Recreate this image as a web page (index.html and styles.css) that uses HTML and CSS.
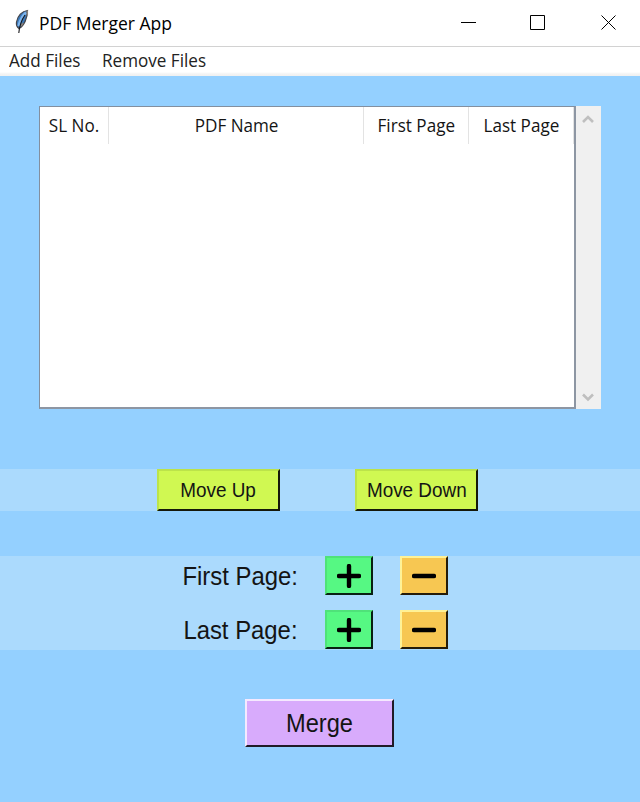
FILE: index.html
```html
<!DOCTYPE html>
<html lang="en">
<head>
<meta charset="utf-8">
<title>PDF Merger App</title>
<link rel="stylesheet" href="styles.css">
</head>
<body>
<header class="titlebar">
  <svg class="feather" width="16" height="26" viewBox="0 0 16 26">
    <path d="M13.500 1.500C8 2 3.500 7 2.500 13c-.5 3 .3 5 2.500 6.500C10 17 13.500 9 13.500 1.500z" fill="#3b78b8" stroke="#45454b" stroke-width="1.200"/>
    <path d="M12 3.500C8 7 6 11 4.500 17" fill="none" stroke="#7fb6ee" stroke-width="2.400"/>
    <path d="M13.300 1.500v5M9 14l-2 3" fill="none" stroke="#8a8178" stroke-width="1.500"/>
    <path d="M11 6C7.500 11 5.500 16 4.800 24" fill="none" stroke="#16161a" stroke-width="1.100"/>
  </svg>
  <h1 class="title">PDF Merger App</h1>
  <svg class="controls" width="160" height="20" viewBox="0 0 160 20" fill="none" stroke="#000">
    <path d="M1 10.500h15M70.500 3.500h14v14h-14zM141.500 3.500l14 14M155.500 3.500l-14 14"/>
  </svg>
</header>
<nav class="menu"><span class="add">Add Files</span><span class="remove">Remove Files</span></nav>
<main class="app">
  <section class="list">
    <div class="table">
      <div class="head">
        <div class="cell"><span>SL No.</span></div>
        <div class="cell"><span>PDF Name</span></div>
        <div class="cell"><span>First Page</span></div>
        <div class="cell"><span>Last Page</span></div>
      </div>
    </div>
    <div class="scroll">
      <svg width="12" height="10" viewBox="0 0 12 10"><path d="M1 8L6 3l5 5" fill="none" stroke="#bfbfbf" stroke-width="2.600"/></svg>
      <svg width="12" height="10" viewBox="0 0 12 10"><path d="M1 2.500l5 5 5-5" fill="none" stroke="#bfbfbf" stroke-width="2.600"/></svg>
    </div>
  </section>
  <section class="band moves">
    <button class="btn lime"><span>Move Up</span></button>
    <button class="btn lime"><span>Move Down</span></button>
  </section>
  <section class="band pages">
    <span class="label">First Page:</span>
    <button class="btn green"><svg width="24" height="24" viewBox="0 0 24 24"><path d="M2 12h20M12 2v20"/></svg></button>
    <button class="btn orange"><svg width="24" height="24" viewBox="0 0 24 24"><path d="M2 12h20"/></svg></button>
    <span class="label">Last Page:</span>
    <button class="btn green"><svg width="24" height="24" viewBox="0 0 24 24"><path d="M2 12h20M12 2v20"/></svg></button>
    <button class="btn orange"><svg width="24" height="24" viewBox="0 0 24 24"><path d="M2 12h20"/></svg></button>
  </section>
  <button class="btn merge"><span>Merge</span></button>
</main>
</body>
</html>
```
FILE: styles.css
```css
* { box-sizing: border-box; }
body { margin: 0; width: 640px; height: 802px; overflow: hidden; background: #94d0ff; color: #141414; font-family: "Open Sans", sans-serif; }
span { display: inline-block; white-space: nowrap; }
.titlebar { height: 47px; display: flex; align-items: flex-start; background: #fff; border-bottom: 1px solid #d2d2d2; padding: 8px 20px 0 14px; }
.feather { flex: none; margin-top: 1px; }
.title { margin: 3px 0 0 9px; font-size: 18px; line-height: 25px; font-weight: 400; color: #000; white-space: nowrap; transform: scaleX(.972); transform-origin: left; }
.controls { flex: none; margin: 4px 0 0 auto; }
.menu { height: 29px; display: flex; background: linear-gradient(#fff 25px, #f3f3f3 27px, #f0f0f0); padding-left: 9px; font-size: 18px; line-height: 27px; color: #222; }
.menu span { transform: scaleX(.95); transform-origin: left; }
.add { width: 93px; }
.app { display: flex; flex-direction: column; }
.list { display: flex; margin: 30px 39px 0; height: 303px; }
.table { width: 537px; background: #fff; border: 2px solid #838b9a; border-width: 1px 2px 2px 1px; border-color: #838f9f #8d96a3 #8d96a3 #838f9f; }
.head { display: grid; grid-template-columns: 69px 255px 105px 105px; height: 37px; }
.cell { border-right: 1px solid #e3e3e3; font-size: 18px; line-height: 36px; display: flex; justify-content: center; }
.cell span { transform: translateX(.5px) scaleX(.95); }
.scroll { width: 25px; flex: none; background: #f0f0f0; display: flex; flex-direction: column; justify-content: space-between; align-items: center; padding: 8px 1px 7px 0; }
.band { background: #abdafd; }
.moves { margin-top: 60px; height: 42px; display: flex; gap: 75px; padding-left: 157px; }
.moves .btn { width: 123px; height: 42px; }
.btn { border: 2px solid; padding: 0; border-radius: 0; display: flex; align-items: center; justify-content: center; font-family: "Liberation Sans", sans-serif; color: #141414; }
.btn span { transform: scaleX(.945); }
.moves span { padding-top: 1px; }
.btn svg { fill: none; stroke: #000; stroke-width: 4.4; stroke-linecap: round; }
.lime { background: #d0f852; border-color: #bce34a #15180a #15180a #bce34a; font-size: 20px; }
.green { background: #56f883; border-color: #4fe279 #092012 #092012 #4fe279; }
.orange { background: #f7c752; border-color: #fff296 #241b09 #241b09 #fff296; }
.pages { margin-top: 45px; height: 94px; display: grid; grid-template-columns: 298px 48px 48px; column-gap: 27px; grid-template-rows: 39px 39px; row-gap: 15px; }
.label { font: 25px/41px "Liberation Sans", sans-serif; justify-self: end; transform: scaleX(.955); transform-origin: right; }
.merge { align-self: flex-start; margin: 49px 0 0 245px; width: 149px; height: 48px; background: #d8abfc; border-color: #f5e9ff #201b27 #201b27 #f5e9ff; font-size: 25px; }
```
